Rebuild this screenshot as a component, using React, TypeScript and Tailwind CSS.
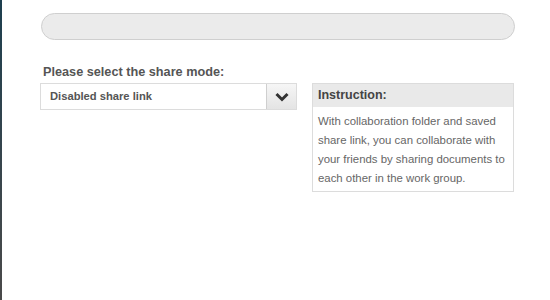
import React, { useState } from 'react';

const ChevronDown: React.FC = () => (
    <svg width="14" height="10" viewBox="0 0 14 10" className="block">
        <path d="M1.5 2 L7 7.5 L12.5 2" fill="none" stroke="#333" strokeWidth="3" strokeLinejoin="miter" />
    </svg>
);

const App: React.FC = () => {
    const [mode] = useState('Disabled share link');

    return (
        <div className="relative h-[300px] w-[550px] bg-white font-['Liberation_Sans',Arial,sans-serif]">
            <div className="absolute left-0 top-0 h-full w-[2px] bg-gradient-to-b from-[#1d3f4f] to-[#4a4a4a]" />
            <div className="pl-[41px] pt-[13px]">
                <div className="h-[27px] w-[474px] rounded-full border border-[#cfcfcf] bg-[#ebebeb]" />
            </div>
            <div className="flex items-start pl-[40px] pt-[25px]">
                <div className="w-[257px]">
                    <div className="pl-[3px] text-[12.7px] font-bold leading-[14px] text-[#555]">Please select the share mode:</div>
                    <div className="mt-[4px] flex h-[27px] border border-[#dcdcdc] bg-white">
                        <div className="flex flex-1 items-center pl-[9px] text-[11.2px] font-bold text-[#555]">{mode}</div>
                        <div className="flex w-[30px] items-center justify-center border-l border-[#cfcfcf] bg-gradient-to-b from-[#f6f6f6] to-[#e4e4e4]">
                            <ChevronDown />
                        </div>
                    </div>
                </div>
                <div className="ml-[15px] mt-[18px] w-[202px] border border-[#dcdcdc]">
                    <div className="bg-[#e9e9e9] px-[5px] pb-[4px] pt-[4px] text-[12.5px] font-bold leading-[15px] text-[#444]">Instruction:</div>
                    <div className="pb-[3px] pl-[5px] pr-[3px] pt-[5px] text-[11.4px] leading-[19px] text-[#666]">
                        With collaboration folder and saved share link, you can collaborate with your friends by sharing documents to each other in the work group.
                    </div>
                </div>
            </div>
        </div>
    );
};

export default App;
